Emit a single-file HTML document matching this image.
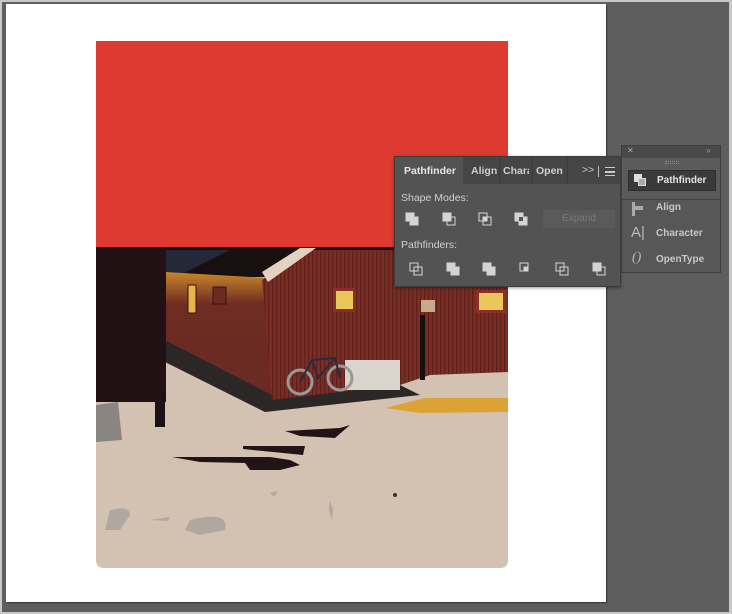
<!DOCTYPE html>
<html><head><meta charset="utf-8"><style>
*{margin:0;padding:0;box-sizing:border-box}
body{width:732px;height:614px;overflow:hidden;background:#5e5e5e;font-family:"Liberation Sans",sans-serif;position:relative}
.abs{position:absolute}
.t{color:#e6e6e6;font-size:10.5px;font-weight:bold}
.l{color:#d0d0d0;font-size:10.5px}
</style></head><body>
<div class="abs" style="left:0;top:0;width:732px;height:614px;border:2px solid #c8c8c8;border-right-width:3px;background:#5e5e5e"></div>
<div class="abs" style="left:6px;top:4px;width:600px;height:598px;background:#fff;box-shadow:1px 1px 1px #333"></div>
<svg class="abs" style="left:0;top:0" width="732" height="614" viewBox="0 0 732 614">
<defs>
<clipPath id="c"><path d="M96 41H508V560Q508 568 500 568H104Q96 568 96 560Z"/></clipPath>
<linearGradient id="g" x1="0" y1="0" x2="0" y2="1"><stop offset="0" stop-color="#c9862c"/><stop offset="0.25" stop-color="#6e2c22"/><stop offset="1" stop-color="#6a2a22"/></linearGradient>
<pattern id="st" width="4" height="10" patternUnits="userSpaceOnUse"><rect width="4" height="10" fill="#7a2d25"/><rect width="1.3" height="10" fill="#5e201b"/></pattern>
</defs>
<g clip-path="url(#c)">
<rect x="96" y="41" width="412" height="207" fill="#de3a30"/>
<rect x="96" y="247" width="412" height="330" fill="#d3c2b2"/>
<rect x="96" y="247" width="412" height="30" fill="#17100f"/>
<path d="M165 250L230 250L160 285Z" fill="#242838"/>
<path d="M165 272L268 278L272 400L165 345Z" fill="url(#g)"/>
<path d="M165 340L272 395L400 385L420 395L265 412L165 362Z" fill="#2b2727"/>
<path d="M262 280L305 250L508 250L508 380L430 380L400 385L272 400Z" fill="url(#st)"/>
<path d="M262 272L300 248L316 248L268 282Z" fill="#e2d2c2"/>
<rect x="96" y="247" width="70" height="155" fill="#211014"/>
<rect x="155" y="395" width="10" height="32" fill="#1a1214"/>
<path d="M96 405L118 402L122 440L96 442Z" fill="#8a8580"/>
<path d="M400 385L430 375L508 372L508 400Z" fill="#d3c2b2"/>
<path d="M385 408L425 398L508 398L508 412L420 413Z" fill="#dda235"/>
<rect x="188" y="285" width="8" height="28" fill="#e8b54a" stroke="#3a1410" stroke-width="1"/>
<rect x="213" y="287" width="13" height="17" fill="#6b2a22" stroke="#3a1410"/>
<rect x="333" y="288" width="23" height="24" fill="#8a3028"/>
<rect x="336" y="291" width="17" height="18" fill="#e9c85a"/>
<rect x="476" y="290" width="30" height="23" fill="#8a3028"/>
<rect x="479" y="293" width="24" height="17" fill="#e9c85a"/>
<rect x="421" y="300" width="14" height="12" fill="#c9a98a"/>
<rect x="420" y="315" width="5" height="65" fill="#151010"/>
<rect x="345" y="360" width="55" height="30" fill="#d9d5cc"/>
<circle cx="300" cy="382" r="12" fill="none" stroke="#999" stroke-width="3"/>
<circle cx="340" cy="378" r="12" fill="none" stroke="#999" stroke-width="3"/>
<path d="M300 382L312 360L335 358L340 378M312 360L318 378L335 358" stroke="#2a2a40" stroke-width="2" fill="none"/>
<path d="M172 457L270 457L290 460L300 465L280 470L250 470L245 463L200 462Z" fill="#221416"/>
<path d="M243 446L305 446L303 455L243 449Z" fill="#221416"/>
<path d="M285 431L340 428L350 425L335 438L300 436Z" fill="#221416"/>
<g fill="#b0a8a0">
<path d="M110 510Q130 505 130 515L120 530L105 530Z"/>
<path d="M190 520Q230 510 225 530L200 535L185 530Z"/>
<path d="M150 520l20 -3l-2 4z"/>
<path d="M330 500l3 10l-1 10l-3-10z"/>
<path d="M270 493l8-2l-4 6z"/>
</g>
<circle cx="395" cy="495" r="2" fill="#333"/>
</g>
</svg>
<!-- main panel -->
<div class="abs" style="left:394px;top:156px;width:227px;height:131px;background:#535353;border:1px solid #3c3c3c;box-shadow:0 1px 3px rgba(0,0,0,.4)">
<div class="abs" style="left:0;top:0;width:225px;height:27px;background:#454545"></div>
<div class="abs" style="left:0;top:0;width:68px;height:27px;background:#535353"></div>
<div class="abs t" style="left:9px;top:8px">Pathfinder</div>
<div class="abs t" style="left:76px;top:8px;color:#cfcfcf;font-weight:bold">Align</div>
<div class="abs" style="left:104px;top:0;width:1px;height:27px;background:#3a3a3a"></div>
<div class="abs t" style="left:108px;top:8px;color:#cfcfcf;width:26px;overflow:hidden;white-space:nowrap">Character</div>
<div class="abs" style="left:137px;top:0;width:1px;height:27px;background:#3a3a3a"></div>
<div class="abs t" style="left:141px;top:8px;color:#cfcfcf">Open</div>
<div class="abs" style="left:172px;top:0;width:1px;height:27px;background:#3a3a3a"></div>
<div class="abs t" style="left:187px;top:7px;color:#cfcfcf;font-weight:normal">&gt;&gt;</div>
<div class="abs" style="left:203px;top:9px;width:1px;height:11px;background:#bbb"></div>
<div class="abs" style="left:210px;top:10px;width:10px;height:9px;border-top:1.5px solid #ccc;border-bottom:1.5px solid #ccc"></div>
<div class="abs" style="left:210px;top:14px;width:10px;height:1.5px;background:#ccc"></div>
<div class="abs l" style="left:6px;top:35px">Shape Modes:</div>
<div class="abs l" style="left:6px;top:82px">Pathfinders:</div>
<div class="abs" style="left:148px;top:53px;width:72px;height:18px;background:#5a5a5a;color:#7a7a7a;font-size:10px;text-align:center;line-height:18px">Expand</div>
<svg class="abs" style="left:0;top:50px" width="225" height="70">
<g fill="#d4d4d4" stroke="#d4d4d4">
<rect x="11" y="6" width="8" height="8"/><rect x="15" y="10" width="8" height="8"/>
<rect x="48" y="6" width="8" height="8"/><rect x="52" y="10" width="8" height="8" fill="none"/>
<rect x="84" y="6" width="8" height="8" fill="none"/><rect x="88" y="10" width="8" height="8" fill="none"/><rect x="88" y="10" width="4" height="4"/>
<rect x="120" y="6" width="8" height="8"/><rect x="124" y="10" width="8" height="8"/><rect x="124" y="10" width="4" height="4" fill="#535353" stroke="none"/>
<rect x="15" y="56" width="8" height="8" fill="none"/><rect x="19" y="60" width="8" height="8" fill="none"/>
<rect x="52" y="56" width="8" height="8"/><rect x="56" y="60" width="8" height="8"/>
<rect x="88" y="56" width="8" height="8"/><rect x="92" y="60" width="8" height="8"/>
<rect x="125" y="56" width="8" height="8" fill="none"/><rect x="129" y="60" width="4" height="4"/><rect x="125" y="56" width="8" height="8" fill="none"/>
<rect x="161" y="56" width="8" height="8" fill="none"/><rect x="165" y="60" width="8" height="8" fill="none"/>
<rect x="198" y="56" width="8" height="8"/><rect x="202" y="60" width="8" height="8" fill="none"/>
</g></svg>
</div>
<!-- side panel -->
<div class="abs" style="left:621px;top:145px;width:100px;height:128px;background:#575757;border:1px solid #3e3e3e">
<div class="abs" style="left:0;top:0;width:98px;height:12px;background:#4a4a4a"></div>
<div class="abs" style="left:5px;top:0;font-size:8px;color:#aaa">✕</div>
<div class="abs" style="left:84px;top:0;font-size:8px;color:#999">»</div>
<div class="abs" style="left:0;top:12px;width:98px;height:42px;background:#5b5b5b;border-bottom:1px solid #444"></div>
<div class="abs" style="left:43px;top:15px;width:14px;height:3px;border-top:1px dotted #888;border-bottom:1px dotted #888"></div>
<div class="abs" style="left:6px;top:24px;width:88px;height:21px;background:#3a3a3a;border:1px solid #2e2e2e"></div>
<div class="abs" style="left:12px;top:28px;width:8px;height:8px;background:#ddd"></div>
<div class="abs" style="left:16px;top:32px;width:8px;height:8px;background:#aaa;border:1px solid #ddd"></div>
<div class="abs t" style="left:35px;top:29px;font-size:10px">Pathfinder</div>
<div class="abs" style="left:10px;top:56px;width:3px;height:14px;background:#aaa"></div>
<div class="abs" style="left:13px;top:60px;width:8px;height:4px;background:#aaa"></div>
<div class="abs t" style="left:34px;top:56px;color:#c8c8c8;font-size:10px">Align</div>
<div class="abs" style="left:9px;top:78px;font-size:15px;color:#bbb">A|</div>
<div class="abs t" style="left:34px;top:82px;color:#c8c8c8;font-size:10px">Character</div>
<div class="abs" style="left:10px;top:104px;font-size:14px;color:#bbb;font-style:italic;font-family:'Liberation Serif',serif">()</div>
<div class="abs t" style="left:34px;top:108px;color:#c8c8c8;font-size:10px">OpenType</div>
</div>
</body></html>
